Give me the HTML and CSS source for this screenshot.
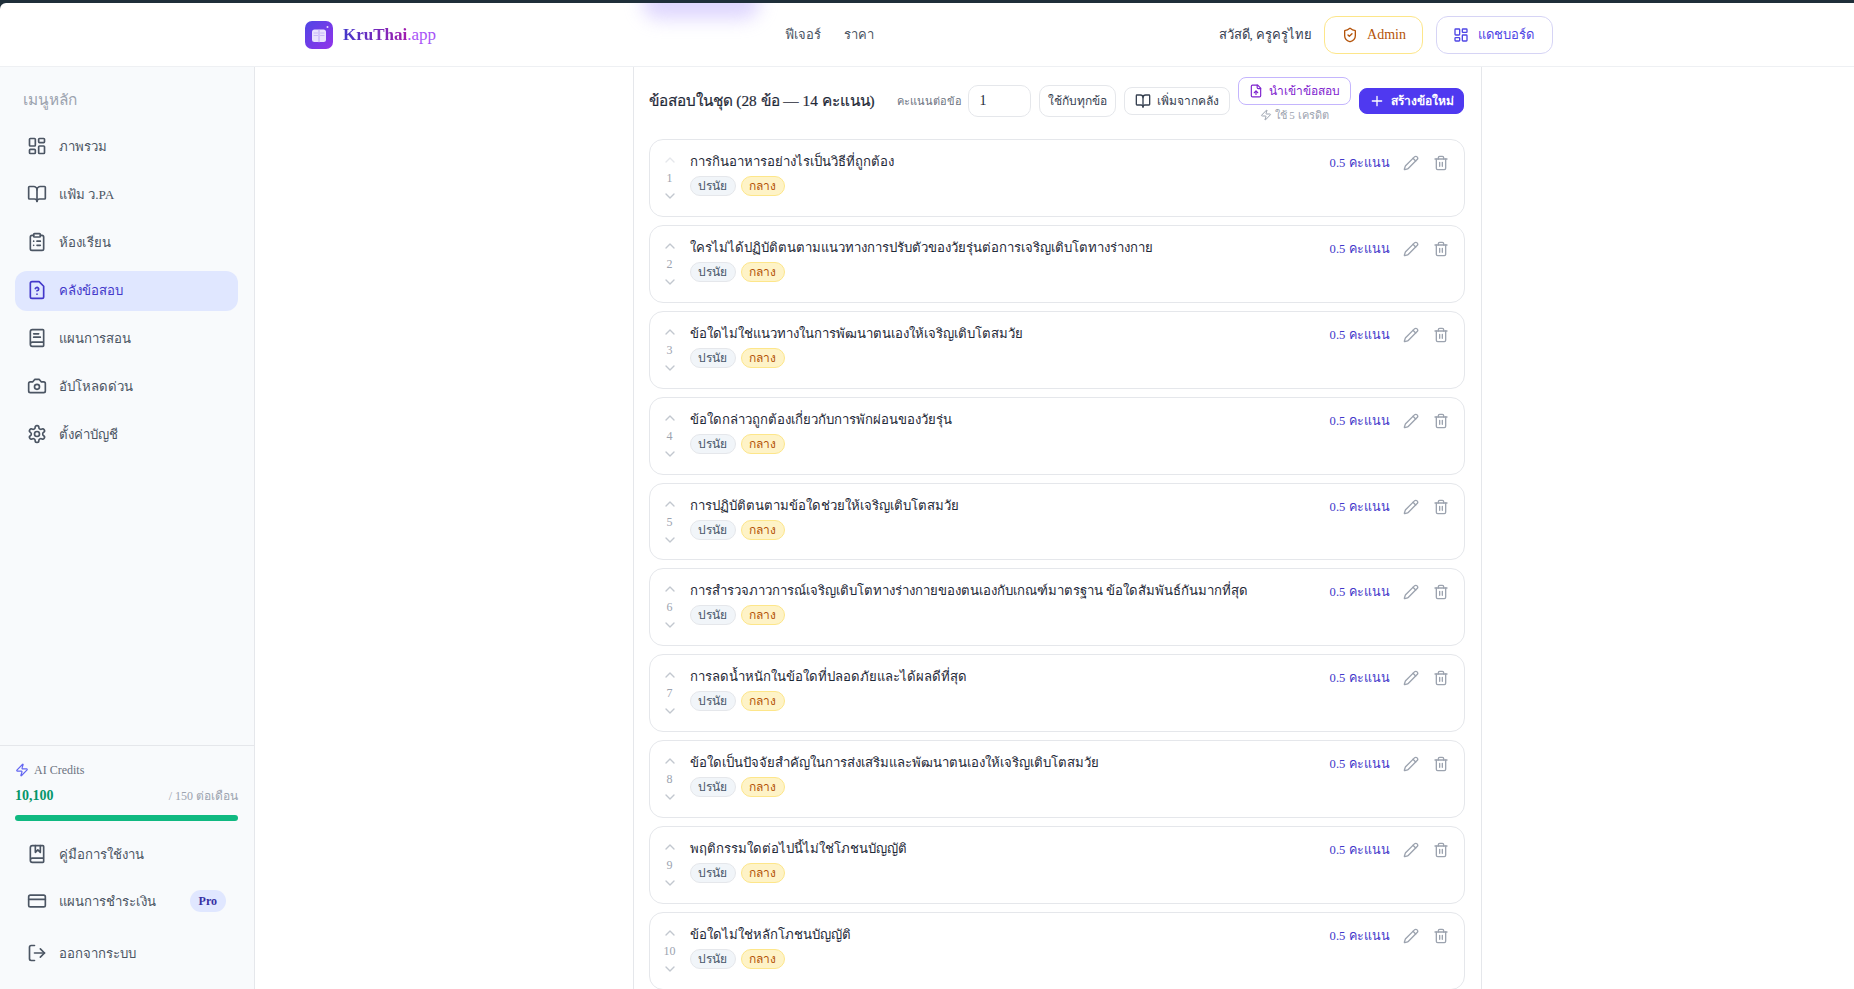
FILE: index.html
```html
<!DOCTYPE html>
<html lang="th">
<head>
<meta charset="utf-8">
<title>KruThai.app</title>
<link rel="stylesheet" href="styles.css">
</head>
<body>
<svg class="defs" width="0" height="0" aria-hidden="true">
<symbol id="i-dash" viewBox="0 0 24 24"><rect x="3" y="3" width="7" height="9" rx="1"/><rect x="14" y="3" width="7" height="5" rx="1"/><rect x="14" y="12" width="7" height="9" rx="1"/><rect x="3" y="16" width="7" height="5" rx="1"/></symbol>
<symbol id="i-book" viewBox="0 0 24 24"><path d="M12 7v14"/><path d="M3 18a1 1 0 0 1-1-1V4a1 1 0 0 1 1-1h5a4 4 0 0 1 4 4 4 4 0 0 1 4-4h5a1 1 0 0 1 1 1v13a1 1 0 0 1-1 1h-6a3 3 0 0 0-3 3 3 3 0 0 0-3-3z"/></symbol>
<symbol id="i-clip" viewBox="0 0 24 24"><rect x="8" y="2" width="8" height="4" rx="1"/><path d="M16 4h2a2 2 0 0 1 2 2v14a2 2 0 0 1-2 2H6a2 2 0 0 1-2-2V6a2 2 0 0 1 2-2h2"/><path d="M12 11h4M12 16h4M8 11h.01M8 16h.01"/></symbol>
<symbol id="i-fq" viewBox="0 0 24 24"><path d="M14.5 2H6a2 2 0 0 0-2 2v16a2 2 0 0 0 2 2h12a2 2 0 0 0 2-2V7.5L14.5 2z"/><path d="M10 10.3c.2-.4.5-.8.9-1a2.1 2.1 0 0 1 2.6.4c.3.4.5.8.5 1.3 0 1.3-2 2-2 2"/><path d="M12 17h.01"/></symbol>
<symbol id="i-text" viewBox="0 0 24 24"><path d="M4 19.5v-15A2.5 2.5 0 0 1 6.5 2H19a1 1 0 0 1 1 1v18a1 1 0 0 1-1 1H6.5a1 1 0 0 1 0-5H20"/><path d="M8 11h8M8 7h6"/></symbol>
<symbol id="i-cam" viewBox="0 0 24 24"><path d="M14.5 4h-5L7 7H4a2 2 0 0 0-2 2v9a2 2 0 0 0 2 2h16a2 2 0 0 0 2-2V9a2 2 0 0 0-2-2h-3l-2.5-3z"/><circle cx="12" cy="13" r="3"/></symbol>
<symbol id="i-gear" viewBox="0 0 24 24"><path d="M12.22 2h-.44a2 2 0 0 0-2 2v.18a2 2 0 0 1-1 1.73l-.43.25a2 2 0 0 1-2 0l-.15-.08a2 2 0 0 0-2.73.73l-.22.38a2 2 0 0 0 .73 2.73l.15.1a2 2 0 0 1 1 1.72v.51a2 2 0 0 1-1 1.74l-.15.09a2 2 0 0 0-.73 2.73l.22.38a2 2 0 0 0 2.73.73l.15-.08a2 2 0 0 1 2 0l.43.25a2 2 0 0 1 1 1.73V20a2 2 0 0 0 2 2h.44a2 2 0 0 0 2-2v-.18a2 2 0 0 1 1-1.73l.43-.25a2 2 0 0 1 2 0l.15.08a2 2 0 0 0 2.73-.73l.22-.39a2 2 0 0 0-.73-2.73l-.15-.08a2 2 0 0 1-1-1.74v-.5a2 2 0 0 1 1-1.74l.15-.09a2 2 0 0 0 .73-2.73l-.22-.38a2 2 0 0 0-2.73-.73l-.15.08a2 2 0 0 1-2 0l-.43-.25a2 2 0 0 1-1-1.73V4a2 2 0 0 0-2-2z"/><circle cx="12" cy="12" r="3"/></symbol>
<symbol id="i-zap" viewBox="0 0 24 24"><path d="M4 14a1 1 0 0 1-.78-1.63l9.9-10.2a.5.5 0 0 1 .86.46l-1.92 6.02A1 1 0 0 0 13 10h7a1 1 0 0 1 .78 1.63l-9.9 10.2a.5.5 0 0 1-.86-.46l1.92-6.02A1 1 0 0 0 11 14z"/></symbol>
<symbol id="i-mark" viewBox="0 0 24 24"><path d="M10 2v8l3-3 3 3V2"/><path d="M4 19.5v-15A2.5 2.5 0 0 1 6.5 2H19a1 1 0 0 1 1 1v18a1 1 0 0 1-1 1H6.5a1 1 0 0 1 0-5H20"/></symbol>
<symbol id="i-card" viewBox="0 0 24 24"><rect x="2" y="5" width="20" height="14" rx="2"/><path d="M2 10h20"/></symbol>
<symbol id="i-out" viewBox="0 0 24 24"><path d="M9 21H5a2 2 0 0 1-2-2V5a2 2 0 0 1 2-2h4"/><path d="m16 17 5-5-5-5"/><path d="M21 12H9"/></symbol>
<symbol id="i-shield" viewBox="0 0 24 24"><path d="M20 13c0 5-3.5 7.5-7.66 8.95a1 1 0 0 1-.67-.01C7.5 20.5 4 18 4 13V6a1 1 0 0 1 1-1c2 0 4.5-1.2 6.24-2.72a1.17 1.17 0 0 1 1.52 0C14.51 3.81 17 5 19 5a1 1 0 0 1 1 1z"/><path d="m9 12 2 2 4-4"/></symbol>
<symbol id="i-fup" viewBox="0 0 24 24"><path d="M15 2H6a2 2 0 0 0-2 2v16a2 2 0 0 0 2 2h12a2 2 0 0 0 2-2V7Z"/><path d="M14 2v4a2 2 0 0 0 2 2h4"/><path d="M12 12v6"/><path d="m15 15-3-3-3 3"/></symbol>
<symbol id="i-plus" viewBox="0 0 24 24"><path d="M5 12h14M12 5v14"/></symbol>
<symbol id="i-pen" viewBox="0 0 24 24"><path d="M21.174 6.812a1 1 0 0 0-3.986-3.987L3.842 16.174a2 2 0 0 0-.5.83l-1.321 4.352a.5.5 0 0 0 .623.622l4.353-1.32a2 2 0 0 0 .83-.497z"/><path d="m15 5 4 4"/></symbol>
<symbol id="i-trash" viewBox="0 0 24 24"><path d="M3 6h18"/><path d="M19 6v14c0 1-1 2-2 2H7c-1 0-2-1-2-2V6"/><path d="M8 6V4c0-1 1-2 2-2h4c1 0 2 1 2 2v2"/><path d="M10 11v6M14 11v6"/></symbol>
<symbol id="i-up" viewBox="0 0 24 24"><path d="m18 15-6-6-6 6"/></symbol>
<symbol id="i-down" viewBox="0 0 24 24"><path d="m6 9 6 6 6-6"/></symbol>
</svg>
<div class="app">
  <header class="topbar">
    <div class="glow"></div>
    <a class="brand">
      <span class="logo">
        <svg viewBox="0 0 28 28" width="28" height="28"><rect x="7" y="8.5" width="14" height="12.5" rx="2.5" fill="#e9e3fd"/><path d="M14 9v12" stroke="#b9a6f5" stroke-width="1"/><path d="M9 12h3.5M9 14.5h3.5M15.5 12h3.5M15.5 14.5h3.5" stroke="#c7b8f7" stroke-width="1"/><circle cx="22.5" cy="6" r="1" fill="#e9e3fd"/></svg>
      </span>
      <span class="brand-name"><span class="brand-main">KruThai</span><span class="brand-app">.app</span></span>
    </a>
    <nav class="topnav"><a>ฟีเจอร์</a><a>ราคา</a></nav>
    <div class="top-right">
      <span class="hello">สวัสดี, ครูครูไทย</span>
      <a class="pill pill-admin"><svg class="ic16"><use href="#i-shield"/></svg>Admin</a>
      <a class="pill pill-dash"><svg class="ic16"><use href="#i-dash"/></svg>แดชบอร์ด</a>
    </div>
  </header>
  <div class="body">
    <aside class="sidebar">
      <div class="side-top">
        <div class="side-label">เมนูหลัก</div>
        <a class="nav"><svg class="ic20"><use href="#i-dash"/></svg>ภาพรวม</a>
        <a class="nav"><svg class="ic20"><use href="#i-book"/></svg>แฟ้ม ว.PA</a>
        <a class="nav"><svg class="ic20"><use href="#i-clip"/></svg>ห้องเรียน</a>
        <a class="nav active"><svg class="ic20"><use href="#i-fq"/></svg>คลังข้อสอบ</a>
        <a class="nav"><svg class="ic20"><use href="#i-text"/></svg>แผนการสอน</a>
        <a class="nav"><svg class="ic20"><use href="#i-cam"/></svg>อัปโหลดด่วน</a>
        <a class="nav"><svg class="ic20"><use href="#i-gear"/></svg>ตั้งค่าบัญชี</a>
      </div>
      <div class="side-bottom">
        <div class="credit-head"><svg class="ic14"><use href="#i-zap"/></svg>AI Credits</div>
        <div class="credit-nums"><b>10,100</b><span>/ 150 ต่อเดือน</span></div>
        <div class="bar"></div>
        <a class="nav nav-guide"><svg class="ic20"><use href="#i-mark"/></svg>คู่มือการใช้งาน</a>
        <a class="nav nav-pay"><svg class="ic20"><use href="#i-card"/></svg>แผนการชำระเงิน<span class="pro">Pro</span></a>
        <a class="nav nav-out"><svg class="ic20"><use href="#i-out"/></svg>ออกจากระบบ</a>
      </div>
    </aside>
    <main class="main">
      <section class="panel">
        <div class="panel-head">
          <h2>ข้อสอบในชุด (28 ข้อ — 14 คะแนน)</h2>
          <div class="tools">
            <span class="per">คะแนนต่อข้อ</span>
            <span class="input">1</span>
            <a class="btn btn-apply">ใช้กับทุกข้อ</a>
            <a class="btn"><svg class="ic16"><use href="#i-book"/></svg>เพิ่มจากคลัง</a>
            <div class="import-wrap">
              <a class="btn btn-import"><svg class="ic14b"><use href="#i-fup"/></svg>นำเข้าข้อสอบ</a>
              <span class="cost"><svg class="ic12"><use href="#i-zap"/></svg>ใช้ 5 เครดิต</span>
            </div>
            <a class="btn btn-new"><svg class="ic16"><use href="#i-plus"/></svg>สร้างข้อใหม่</a>
          </div>
        </div>
        <div class="rows">
          <article class="row"><div class="order"><svg class="ch faint"><use href="#i-up"/></svg><span>1</span><svg class="ch"><use href="#i-down"/></svg></div><div class="q"><p>การกินอาหารอย่างไรเป็นวิธีที่ถูกต้อง</p><div class="chips"><span class="chip c1">ปรนัย</span><span class="chip c2">กลาง</span></div></div><div class="act"><span class="pts">0.5 คะแนน</span><svg class="ic16g"><use href="#i-pen"/></svg><svg class="ic16g"><use href="#i-trash"/></svg></div></article>
          <article class="row"><div class="order"><svg class="ch"><use href="#i-up"/></svg><span>2</span><svg class="ch"><use href="#i-down"/></svg></div><div class="q"><p>ใครไม่ได้ปฏิบัติตนตามแนวทางการปรับตัวของวัยรุ่นต่อการเจริญเติบโตทางร่างกาย</p><div class="chips"><span class="chip c1">ปรนัย</span><span class="chip c2">กลาง</span></div></div><div class="act"><span class="pts">0.5 คะแนน</span><svg class="ic16g"><use href="#i-pen"/></svg><svg class="ic16g"><use href="#i-trash"/></svg></div></article>
          <article class="row"><div class="order"><svg class="ch"><use href="#i-up"/></svg><span>3</span><svg class="ch"><use href="#i-down"/></svg></div><div class="q"><p>ข้อใดไม่ใช่แนวทางในการพัฒนาตนเองให้เจริญเติบโตสมวัย</p><div class="chips"><span class="chip c1">ปรนัย</span><span class="chip c2">กลาง</span></div></div><div class="act"><span class="pts">0.5 คะแนน</span><svg class="ic16g"><use href="#i-pen"/></svg><svg class="ic16g"><use href="#i-trash"/></svg></div></article>
          <article class="row"><div class="order"><svg class="ch"><use href="#i-up"/></svg><span>4</span><svg class="ch"><use href="#i-down"/></svg></div><div class="q"><p>ข้อใดกล่าวถูกต้องเกี่ยวกับการพักผ่อนของวัยรุ่น</p><div class="chips"><span class="chip c1">ปรนัย</span><span class="chip c2">กลาง</span></div></div><div class="act"><span class="pts">0.5 คะแนน</span><svg class="ic16g"><use href="#i-pen"/></svg><svg class="ic16g"><use href="#i-trash"/></svg></div></article>
          <article class="row"><div class="order"><svg class="ch"><use href="#i-up"/></svg><span>5</span><svg class="ch"><use href="#i-down"/></svg></div><div class="q"><p>การปฏิบัติตนตามข้อใดช่วยให้เจริญเติบโตสมวัย</p><div class="chips"><span class="chip c1">ปรนัย</span><span class="chip c2">กลาง</span></div></div><div class="act"><span class="pts">0.5 คะแนน</span><svg class="ic16g"><use href="#i-pen"/></svg><svg class="ic16g"><use href="#i-trash"/></svg></div></article>
          <article class="row"><div class="order"><svg class="ch"><use href="#i-up"/></svg><span>6</span><svg class="ch"><use href="#i-down"/></svg></div><div class="q"><p>การสำรวจภาวการณ์เจริญเติบโตทางร่างกายของตนเองกับเกณฑ์มาตรฐาน ข้อใดสัมพันธ์กันมากที่สุด</p><div class="chips"><span class="chip c1">ปรนัย</span><span class="chip c2">กลาง</span></div></div><div class="act"><span class="pts">0.5 คะแนน</span><svg class="ic16g"><use href="#i-pen"/></svg><svg class="ic16g"><use href="#i-trash"/></svg></div></article>
          <article class="row"><div class="order"><svg class="ch"><use href="#i-up"/></svg><span>7</span><svg class="ch"><use href="#i-down"/></svg></div><div class="q"><p>การลดน้ำหนักในข้อใดที่ปลอดภัยและได้ผลดีที่สุด</p><div class="chips"><span class="chip c1">ปรนัย</span><span class="chip c2">กลาง</span></div></div><div class="act"><span class="pts">0.5 คะแนน</span><svg class="ic16g"><use href="#i-pen"/></svg><svg class="ic16g"><use href="#i-trash"/></svg></div></article>
          <article class="row"><div class="order"><svg class="ch"><use href="#i-up"/></svg><span>8</span><svg class="ch"><use href="#i-down"/></svg></div><div class="q"><p>ข้อใดเป็นปัจจัยสำคัญในการส่งเสริมและพัฒนาตนเองให้เจริญเติบโตสมวัย</p><div class="chips"><span class="chip c1">ปรนัย</span><span class="chip c2">กลาง</span></div></div><div class="act"><span class="pts">0.5 คะแนน</span><svg class="ic16g"><use href="#i-pen"/></svg><svg class="ic16g"><use href="#i-trash"/></svg></div></article>
          <article class="row"><div class="order"><svg class="ch"><use href="#i-up"/></svg><span>9</span><svg class="ch"><use href="#i-down"/></svg></div><div class="q"><p>พฤติกรรมใดต่อไปนี้ไม่ใช่โภชนบัญญัติ</p><div class="chips"><span class="chip c1">ปรนัย</span><span class="chip c2">กลาง</span></div></div><div class="act"><span class="pts">0.5 คะแนน</span><svg class="ic16g"><use href="#i-pen"/></svg><svg class="ic16g"><use href="#i-trash"/></svg></div></article>
          <article class="row"><div class="order"><svg class="ch"><use href="#i-up"/></svg><span>10</span><svg class="ch"><use href="#i-down"/></svg></div><div class="q"><p>ข้อใดไม่ใช่หลักโภชนบัญญัติ</p><div class="chips"><span class="chip c1">ปรนัย</span><span class="chip c2">กลาง</span></div></div><div class="act"><span class="pts">0.5 คะแนน</span><svg class="ic16g"><use href="#i-pen"/></svg><svg class="ic16g"><use href="#i-trash"/></svg></div></article>
        </div>
      </section>
    </main>
  </div>
</div>
</body>
</html>
```

FILE: styles.css
```css
* { box-sizing: border-box; }
html, body { height: 100%; margin: 0; }
body {
  background: #1f2f3a;
  font-family: "Liberation Serif", "Noto Sans", serif;
  color: #1f2937;
  overflow: hidden;
  padding-top: 3px;
}
.defs { position: absolute; }
svg { fill: none; stroke: currentColor; stroke-width: 2; stroke-linecap: round; stroke-linejoin: round; flex: none; }
.ic20 { width: 20px; height: 20px; }
.ic16, .ic16g { width: 16px; height: 16px; }
.ic14, .ic14b { width: 14px; height: 14px; }
.ic12 { width: 12px; height: 12px; }
.app { height: 986px; background: #fff; border-top-left-radius: 6px; display: flex; flex-direction: column; overflow: hidden; }

.topbar { position: relative; flex: none; height: 64px; border-bottom: 1px solid #eef0f3; display: flex; align-items: center; padding: 0 301px 0 305px; }
.glow { position: absolute; left: 642px; top: -18px; width: 118px; height: 34px; border-radius: 17px; background: #c4b5fd; opacity: .55; filter: blur(9px); }
.brand { display: flex; align-items: center; gap: 10px; width: 480px; }
.logo { width: 28px; height: 28px; border-radius: 7px; background: linear-gradient(135deg, #4f46e5, #9333ea); display: block; }
.logo svg { stroke: none; display: block; }
.brand-name { font-size: 17px; }
.brand-main { font-weight: 700; background: linear-gradient(90deg, #4338ca, #a21caf); -webkit-background-clip: text; background-clip: text; color: transparent; }
.brand-app { color: #a855f7; }
.topnav { display: flex; gap: 23px; font-size: 13px; color: #4b5563; margin-top: -1px; }
.top-right { margin-left: auto; display: flex; align-items: center; gap: 12px; }
.hello { font-size: 13px; color: #374151; }
.pill { height: 38px; border-radius: 12px; display: flex; align-items: center; gap: 9px; font-size: 13px; background: #fff; }
.pill-admin { border: 1px solid #fde68a; color: #b45309; font-size: 14px; padding: 0 16px 0 17px; }
.pill-dash { border: 1px solid #d6d4f5; color: #4f46e5; padding: 0 18px 0 16px; margin-left: 1px; }

.body { flex: 1; display: flex; min-height: 0; }
.sidebar { flex: none; width: 255px; background: #f8fafc; border-right: 1px solid #e5e7eb; display: flex; flex-direction: column; justify-content: space-between; }
.side-top { padding: 24px 16px 0 15px; }
.side-label { font-size: 15.4px; color: #9ca3af; height: 20px; line-height: 18px; padding-left: 8px; margin-bottom: 16px; }
.nav { height: 40px; margin-bottom: 8px; border-radius: 12px; padding: 0 12px 2px; display: flex; align-items: center; gap: 12px; font-size: 13.2px; color: #4b5563; }
.nav.active { background: #e0e7ff; color: #4338ca; }
.side-bottom { border-top: 1px solid #e5e7eb; padding: 15px 16px 0 15px; height: 244px; }
.side-bottom .nav { padding-bottom: 0; }
.credit-head { display: flex; align-items: center; gap: 5px; font-size: 12px; color: #6b7280; height: 18px; }
.credit-head svg { color: #6366f1; }
.credit-nums { display: flex; justify-content: space-between; align-items: baseline; margin-top: 7px; height: 18px; }
.credit-nums b { font-size: 14px; color: #059669; }
.credit-nums span { font-size: 12px; color: #9ca3af; }
.bar { height: 6px; border-radius: 3px; background: #10b981; margin-top: 11px; margin-bottom: 13px; }
.nav-guide { margin-bottom: 7px; }
.nav-pay { margin-bottom: 12px; }
.pro { margin-left: auto; font-size: 12px; font-weight: 700; color: #3730a3; background: #e0e7ff; border-radius: 11px; height: 22px; line-height: 22px; padding: 0 9px; }

.main { flex: 1; min-width: 0; overflow: hidden; padding-left: 5px; display: flex; justify-content: center; }
.panel { width: 849px; flex: none; border: 1px solid #e5e7eb; border-top: 0; border-bottom: 0; padding: 0 16px 0 15px; }
.panel-head { display: flex; align-items: center; justify-content: space-between; height: 72px; padding-bottom: 5px; }
h2 { margin: 0; font-size: 15.3px; font-weight: 400; color: #1f2937; -webkit-text-stroke: .2px #1f2937; white-space: nowrap; }
.tools { display: flex; align-items: center; gap: 8px; margin-right: 1px; }
.per { font-size: 11px; color: #6b7280; margin-right: -2px; white-space: nowrap; }
.input { width: 63px; height: 32px; border: 1px solid #e5e7eb; border-radius: 10px; font-size: 14px; line-height: 30px; padding-left: 11px; color: #1f2937; }
.btn { height: 28px; border: 1px solid #e5e7eb; border-radius: 8px; display: flex; align-items: center; gap: 6px; padding: 0 10px; font-size: 12px; color: #374151; background: #fff; white-space: nowrap; }
.btn-apply { height: 32px; border-radius: 10px; padding: 0 8px; }
.import-wrap { display: flex; flex-direction: column; align-items: center; gap: 3px; margin-top: -3px; }
.btn-import { border-color: #c4b5fd; color: #7e22ce; }
.cost { display: flex; align-items: center; gap: 3px; font-size: 11px; color: #9ca3af; height: 14px; }
.btn-new { background: #4f39f0; border-color: #4f39f0; color: #fff; font-weight: 700; padding: 0 9px; height: 26px; }

.rows { display: flex; flex-direction: column; gap: 8px; }
.row { height: 77.9px; flex: none; border: 1px solid #e5e7eb; border-radius: 14px; display: flex; padding: 0 12px 0 0; background: #fff; }
.order { width: 40px; display: flex; flex-direction: column; align-items: center; justify-content: center; font-size: 12px; color: #9ca3af; }
.order span { line-height: 14px; height: 14px; margin: 1px 0; }
.ch { width: 16px; height: 16px; color: #c2c7cf; margin: 2px 0; }
.ch.faint { color: #e5e7eb; }
.q { flex: 1; min-width: 0; padding-top: 12px; }
.q p { margin: 0; font-size: 13.15px; line-height: 20px; color: #1f2937; }
.chips { display: flex; gap: 5px; margin-top: 4px; }
.chip { height: 20px; line-height: 18px; border-radius: 10px; font-size: 12px; padding: 0 7.5px; border: 1px solid; }
.c1 { background: #f1f5f9; border-color: #e5e7eb; color: #475569; }
.c2 { background: #fef3c7; border-color: #fde68a; color: #b45309; }
.act { display: flex; align-items: flex-start; padding-top: 14px; padding-right: 3px; gap: 13px; }
.pts { font-size: 12.6px; color: #4338ca; line-height: 18px; }
.ic16g { color: #9ca3af; margin-top: 1px; }
.ic16g:last-child { margin-left: 1px; }
```
